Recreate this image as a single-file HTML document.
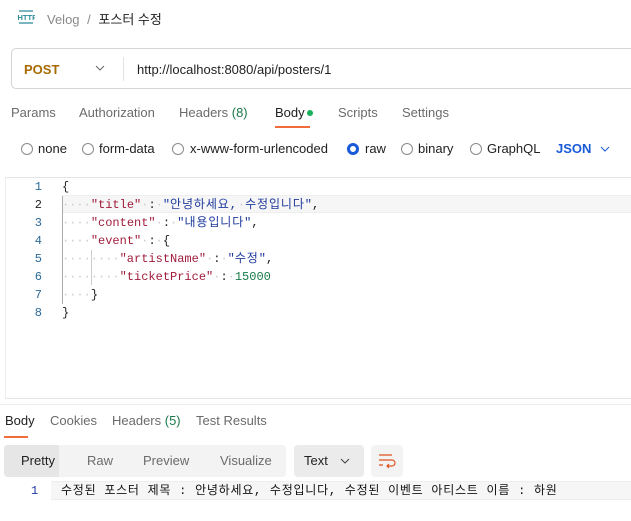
<!DOCTYPE html>
<html><head><meta charset="utf-8"><style>
*{margin:0;padding:0;box-sizing:border-box}
body{width:631px;height:521px;overflow:hidden;background:#fff;font-family:"Liberation Sans","Noto Sans CJK KR",sans-serif;font-size:13px;color:#212121;position:relative}
.a{position:absolute;white-space:nowrap}
.g{color:#6b6b6b}
.mono{font-family:"Liberation Mono","Noto Sans CJK KR",monospace;font-size:12px;line-height:16px}
.mono div{height:16px;line-height:16px;white-space:nowrap}
.ko{letter-spacing:0.9px}
.rad{position:absolute;width:12px;height:12px;border:1px solid #8a8a8a;border-radius:50%;top:143px}
.ln{position:absolute;left:22px;width:20px;text-align:right;color:#2a6a9a}
.cl{position:absolute;left:62px;color:#222}
.k{color:#a01d3c}.s{color:#1f3a9e}.n{color:#1a7a4a}.d{color:#ccc}
</style></head><body>
<svg class="a" style="left:17px;top:9px" width="18" height="16" viewBox="0 0 18 16"><path d="M2 2h14M2 14h14" stroke="#2b8a9a" stroke-width="1.2"/><text x="0.5" y="11" font-size="7.5" font-family="Liberation Sans" fill="#2b8a9a" font-weight="bold">HTTP</text></svg>
<div class="a" style="left:47px;top:9px;font-size:13px;color:#8a8a8a">Velog <span style="margin:0 4px">/</span> <span style="color:#212121">포스터 수정</span></div>
<div class="a" style="left:11px;top:48px;width:640px;height:41px;border:1px solid #d4d4d4;border-radius:5px"></div>
<div class="a" style="left:24px;top:62px;color:#a86a00;font-weight:bold;font-size:13px">POST</div>
<svg class="a" style="left:95px;top:65px" width="10" height="6"><path d="M1 1l4 4 4-4" stroke="#666" fill="none"/></svg>
<div class="a" style="left:123px;top:57px;width:1px;height:24px;background:#e2e2e2"></div>
<div class="a" style="left:137px;top:62px">http://localhost:8080/api/posters/1</div>
<div class="a g" style="left:11px;top:105px">Params</div>
<div class="a g" style="left:79px;top:105px">Authorization</div>
<div class="a g" style="left:179px;top:105px">Headers <span style="color:#1a7a4a">(8)</span></div>
<div class="a" style="left:275px;top:105px">Body</div>
<div class="a" style="left:307px;top:110px;width:6px;height:6px;border-radius:50%;background:#18b05a"></div>
<div class="a" style="left:275px;top:126px;width:35px;height:2px;background:#f26b3a"></div>
<div class="a g" style="left:338px;top:105px">Scripts</div>
<div class="a g" style="left:402px;top:105px">Settings</div>
<div class="rad" style="left:21px"></div><div class="a" style="left:38px;top:141px">none</div>
<div class="rad" style="left:82px"></div><div class="a" style="left:99px;top:141px">form-data</div>
<div class="rad" style="left:172px"></div><div class="a" style="left:190px;top:141px">x-www-form-urlencoded</div>
<div class="rad" style="left:347px;border:3px solid #1a5ad8"></div><div class="a" style="left:365px;top:141px">raw</div>
<div class="rad" style="left:401px"></div><div class="a" style="left:418px;top:141px">binary</div>
<div class="rad" style="left:470px"></div><div class="a" style="left:487px;top:141px">GraphQL</div>
<div class="a" style="left:556px;top:141px;color:#1a5ad8;font-weight:bold">JSON</div>
<svg class="a" style="left:600px;top:146px" width="10" height="6"><path d="M1 1l4 4 4-4" stroke="#1a5ad8" fill="none"/></svg>
<div class="a" style="left:5px;top:177px;width:630px;height:222px;border-top:1px solid #e4e4e4;border-bottom:1px solid #e4e4e4;border-left:1px solid #eee"></div>
<div class="a" style="left:62px;top:195px;width:570px;height:18px;background:#f6f6f6;border-top:1px solid #eee;border-bottom:1px solid #eee"></div>
<div class="a" style="left:62px;top:196px;width:1px;height:108px;background:#aaa"></div>
<div class="a" style="left:91px;top:250px;width:1px;height:35px;background:#ccc"></div>
<div class="mono">
<div class="ln" style="top:179px">1</div><div class="cl" style="top:179px">{</div>
<div class="ln" style="top:197px;color:#222">2</div><div class="cl" style="top:197px"><span class="d">····</span><span class="k">"title"</span><span class="d">·</span>:<span class="d">·</span><span class="s">"<span class="ko">안녕하세요,</span><span class="d">·</span><span class="ko">수정입니다</span>"</span>,</div>
<div class="ln" style="top:215px">3</div><div class="cl" style="top:215px"><span class="d">····</span><span class="k">"content"</span><span class="d">·</span>:<span class="d">·</span><span class="s">"<span class="ko">내용입니다</span>"</span>,</div>
<div class="ln" style="top:233px">4</div><div class="cl" style="top:233px"><span class="d">····</span><span class="k">"event"</span><span class="d">·</span>:<span class="d">·</span>{</div>
<div class="ln" style="top:251px">5</div><div class="cl" style="top:251px"><span class="d">········</span><span class="k">"artistName"</span><span class="d">·</span>:<span class="d">·</span><span class="s">"<span class="ko">수정</span>"</span>,</div>
<div class="ln" style="top:269px">6</div><div class="cl" style="top:269px"><span class="d">········</span><span class="k">"ticketPrice"</span><span class="d">·</span>:<span class="d">·</span><span class="n">15000</span></div>
<div class="ln" style="top:287px">7</div><div class="cl" style="top:287px"><span class="d">····</span>}</div>
<div class="ln" style="top:305px">8</div><div class="cl" style="top:305px">}</div>
</div>
<div class="a" style="left:0;top:404px;width:631px;height:1px;background:#ececec"></div>
<div class="a" style="left:5px;top:413px">Body</div>
<div class="a" style="left:4px;top:436px;width:24px;height:2px;background:#f26b3a"></div>
<div class="a g" style="left:50px;top:413px">Cookies</div>
<div class="a g" style="left:112px;top:413px">Headers <span style="color:#1a7a4a">(5)</span></div>
<div class="a g" style="left:196px;top:413px">Test Results</div>
<div class="a" style="left:4px;top:445px;width:282px;height:32px;background:#f3f3f3;border-radius:4px"></div>
<div class="a" style="left:4px;top:445px;width:55px;height:32px;background:#e6e6e6;border-radius:4px 0 0 4px"></div>
<div class="a" style="left:21px;top:453px">Pretty</div>
<div class="a g" style="left:87px;top:453px">Raw</div>
<div class="a g" style="left:143px;top:453px">Preview</div>
<div class="a g" style="left:220px;top:453px">Visualize</div>
<div class="a" style="left:294px;top:445px;width:70px;height:32px;background:#ebebeb;border-radius:4px"></div>
<div class="a" style="left:304px;top:453px">Text</div>
<svg class="a" style="left:340px;top:458px" width="10" height="6"><path d="M1 1l4 4 4-4" stroke="#444" fill="none"/></svg>
<div class="a" style="left:371px;top:445px;width:32px;height:32px;background:#f3f3f3;border-radius:4px"></div>
<svg class="a" style="left:378px;top:453px" width="18" height="16" viewBox="0 0 18 16"><path d="M1 2h13M1 7h13M1 12h4" stroke="#e0521e" stroke-width="1.2" fill="none"/><path d="M14 7a3 3 0 0 1 0 6h-5m2-2l-2 2 2 2" stroke="#e0521e" stroke-width="1.2" fill="none"/></svg>
<div class="a" style="left:51px;top:481px;width:590px;height:19px;background:#f6f6f6;border-top:1px solid #eee;border-bottom:1px solid #eee"></div>
<div class="a mono" style="left:31px;top:483px;color:#1f3a9e">1</div>
<div class="a mono" style="left:61px;top:483px;color:#111;letter-spacing:0.75px">수정된 포스터 제목 : 안녕하세요, 수정입니다, 수정된 이벤트 아티스트 이름 : 하원</div>
</body></html>
